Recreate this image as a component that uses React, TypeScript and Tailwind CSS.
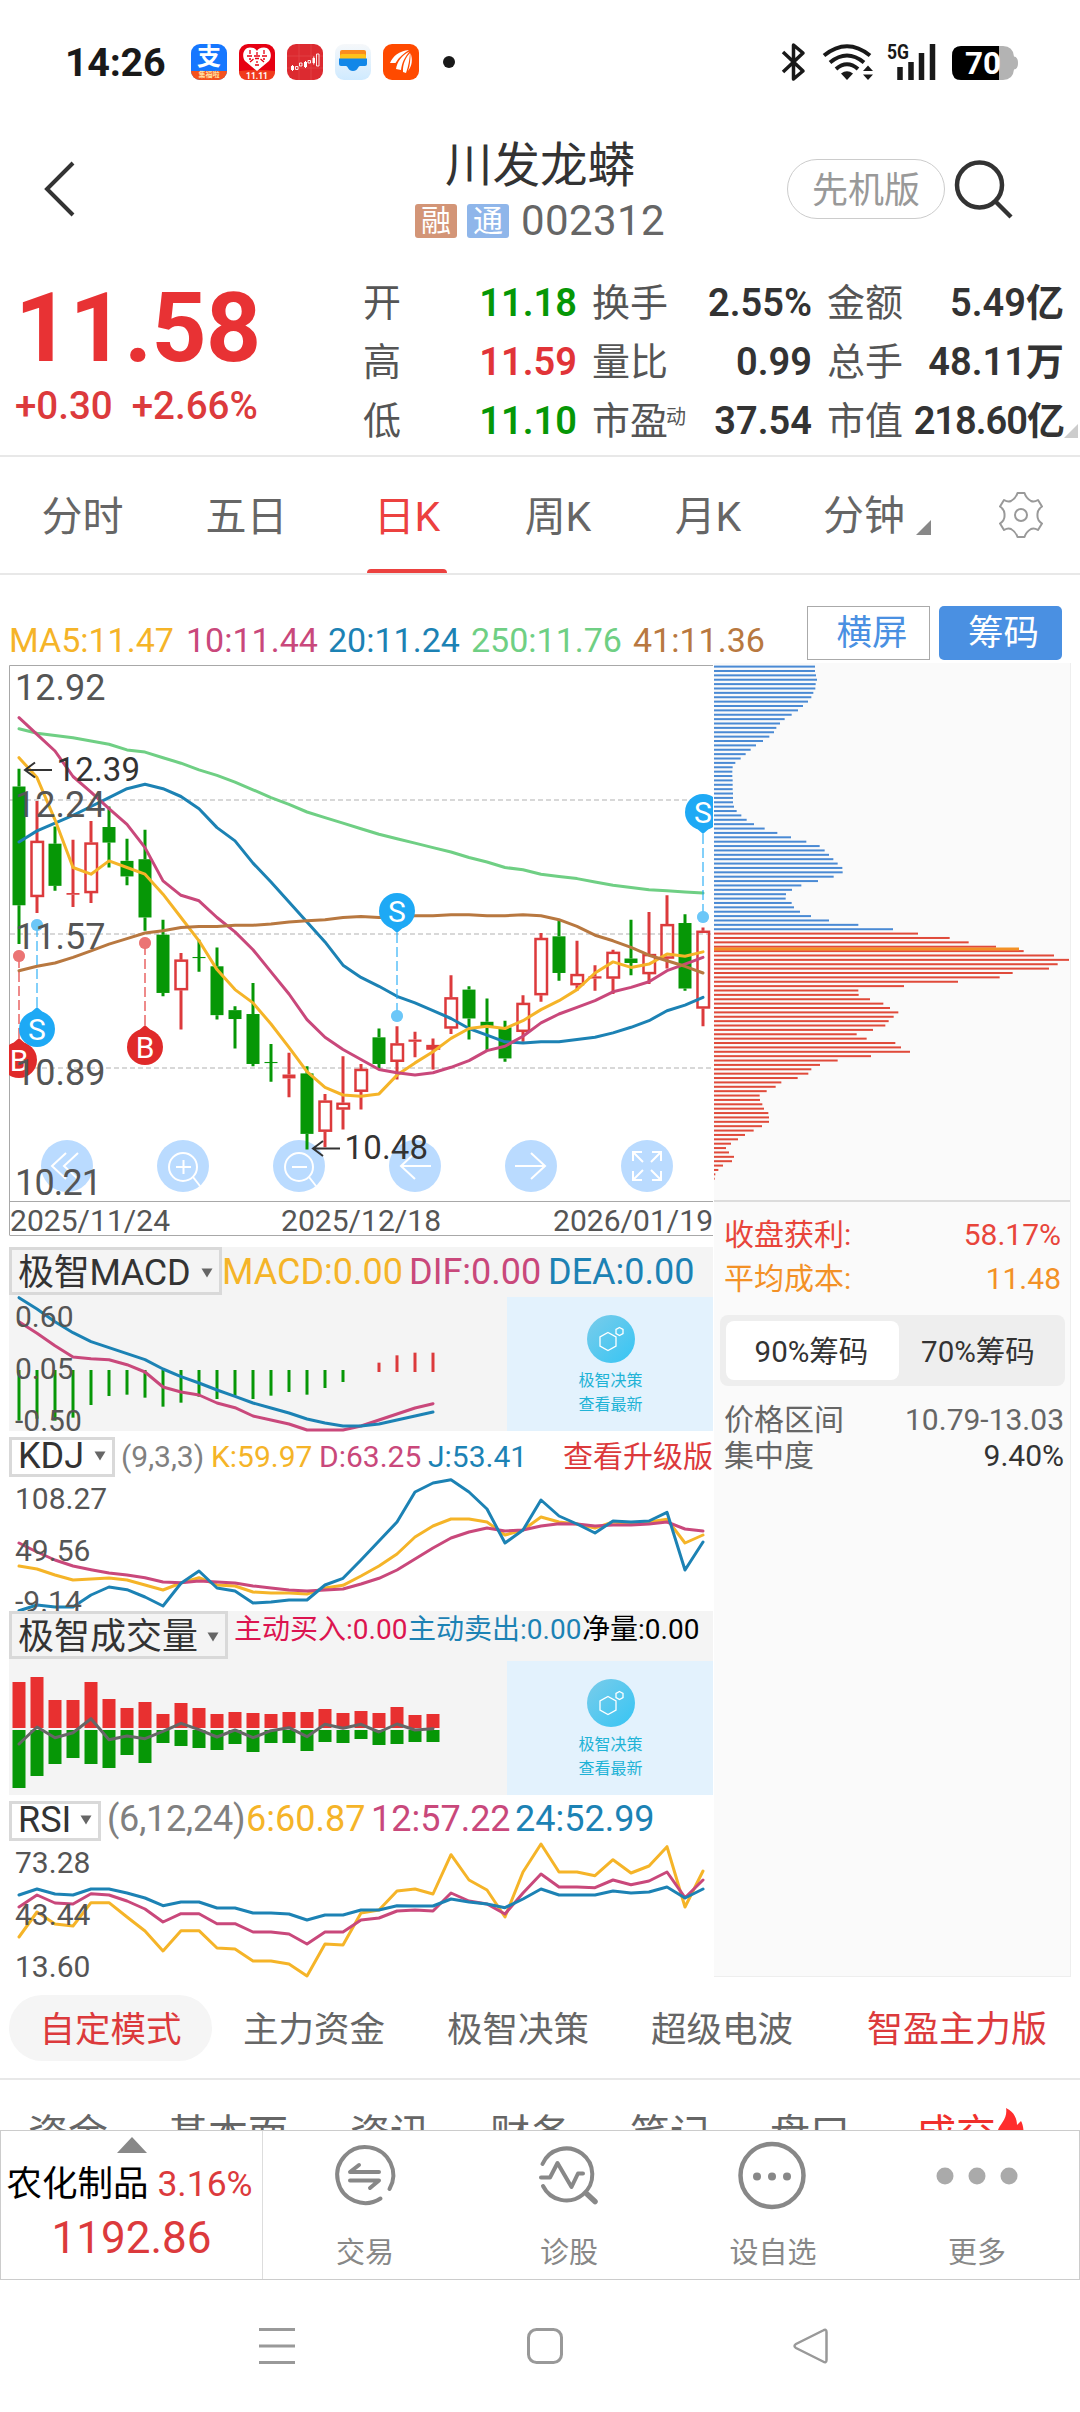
import type { ReactNode } from 'react';

const FONT = "font-[Roboto,'Noto_Sans_CJK_SC',sans-serif]";

const YELLOW = '#f5b428';
const PINK = '#c9487b';
const BLUE = '#1c82b4';
const RED = '#dc3a3c';
const GREEN = '#069706';

const STEP = 18;
const xAt = (i: number) => 19 + i * STEP;

// high, body top, body bottom, low, direction
type Candle = [number, number, number, number, 'u' | 'd' | 'f'];

const candles: Candle[] = [
  [98, 114, 221, 256, 'd'],
  [127, 163, 213.5, 228, 'u'],
  [150, 165.5, 203.5, 208, 'd'],
  [162, 210, 211.5, 222.5, 'f'],
  [145, 164.5, 210, 219, 'u'],
  [132, 150.5, 164.5, 187, 'd'],
  [161, 181, 195, 203, 'd'],
  [153, 179.5, 232, 244, 'd'],
  [234, 247.5, 300, 303, 'd'],
  [264, 270, 297.5, 333, 'u'],
  [252, 267.6, 268.6, 281, 'd'],
  [259, 276, 320, 324, 'd'],
  [312, 315.5, 323.5, 350, 'd'],
  [291, 319, 364, 366, 'd'],
  [346, 362.2, 363.2, 380, 'd'],
  [354, 373.5, 377, 394, 'f'],
  [366, 372.5, 427, 441, 'd'],
  [391, 397, 425, 439, 'u'],
  [357, 399, 405, 423, 'u'],
  [364, 368.5, 389, 405, 'u'],
  [332, 340, 364, 368, 'd'],
  [330, 345.5, 362, 378, 'u'],
  [335, 342, 344, 358, 'f'],
  [341, 347, 351, 369, 'u'],
  [284, 304, 332, 337, 'u'],
  [294, 297, 323, 342, 'd'],
  [305, 326, 330, 352, 'd'],
  [325, 331, 359, 362, 'd'],
  [302, 309, 335, 344, 'u'],
  [246, 250.5, 302, 308, 'u'],
  [234, 249, 282, 289, 'd'],
  [253, 283, 293, 298, 'u'],
  [275, 285, 287, 298, 'f'],
  [261, 263, 287, 301, 'u'],
  [234, 269, 273, 284, 'd'],
  [227, 265, 283, 292, 'u'],
  [212, 238, 269, 278, 'u'],
  [229, 237, 296, 298, 'd'],
  [241, 244, 314, 330, 'u'],
];

const maLines = [
  { color: '#6fcf84', values: [62, 66, 68, 70, 73, 76, 81, 83, 88, 93, 99, 104, 110, 117, 124, 130, 137, 142, 147, 152, 157, 161, 165, 169, 173, 178, 182, 187, 189, 193, 195, 197, 200, 203, 205, 207, 208, 209, 210] },
  { color: BLUE, values: [164, 154, 147, 140, 132, 124, 116, 112, 116, 123, 134, 151, 163, 183, 200, 218, 236, 254, 275, 286, 294, 303, 309, 316, 323, 332, 338, 344, 345, 344, 344, 342, 340, 336, 331, 325, 316, 311, 304] },
  { color: YELLOW, values: [88, 106, 144, 187, 193, 181, 187, 193, 211, 232, 253, 279, 297, 309, 328, 349, 371, 385, 392, 393, 391, 374, 363, 353, 341, 332, 330, 332, 325, 315, 307, 297, 282, 272, 277, 274, 265, 267, 263] },
  { color: PINK, values: [52, 67, 82, 105, 119, 134, 148, 169, 199, 212, 217, 232, 245, 261, 281, 301, 324, 340, 351, 360, 369, 372, 374, 372, 367, 361, 352, 348, 339, 327, 319, 313, 307, 299, 295, 290, 280, 274, 268] },
  { color: '#b87840', values: [280, 276, 273, 268, 262, 256, 251, 246, 244, 241, 240, 240, 239, 239, 238, 236, 235, 234, 232, 231, 232, 231.5, 230.5, 230.5, 229.5, 229.5, 230.5, 230.5, 229.5, 230.5, 234, 240, 248, 253, 259, 266, 271, 276, 282] },
];

const chips = [
  345, 345, 348, 351, 347, 346, 340, 334, 324, 309, 294, 275, 254, 240, 229, 222, 208, 189, 168, 152, 137, 122, 106, 98, 97, 97, 98, 98, 98, 99,
  99, 99, 102, 110, 124, 140, 162, 194, 232, 273, 319, 359, 374, 387, 400, 413, 427, 428, 401, 354, 304, 276, 258, 257, 275, 282, 300, 333, 387, 475,
  579, 654, 749, 806, 888, 971, 1062, 1107, 1073, 1047, 938, 899, 774, 612, 475, 476, 510, 550, 570, 595, 581, 566, 556, 519, 470, 500, 586, 603, 630, 513,
  413, 360, 334, 325, 293, 244, 227, 200, 179, 180, 187, 192, 205, 207, 207, 186, 161, 135, 114, 93, 78, 87, 102, 96, 69, 55, 46, 44,
];
const FIRST_RED_CHIP = 61;

const macdBars = [572, 566, 572, 563, 525, 498, 494, 503, 530, 518, 500, 507, 497, 507, 497, 486, 494, 474, 456];
const macdRed = [398, 376, 368, 368];
const dea = [203, 237, 275, 308, 335, 353, 371, 389, 417, 440, 459, 480, 499, 519, 534, 549, 567, 579, 588, 588, 582, 570, 558, 546];
const dif = [275, 310, 347, 381, 386, 389, 404, 426, 471, 486, 495, 519, 533, 558, 570, 582, 600, 600, 600, 588, 570, 552, 534, 521];

const kdjK = [1008, 1017, 1035, 1050, 1047, 1044, 1050, 1065, 1080, 1059, 1043, 1065, 1068, 1086, 1089, 1089, 1092, 1074, 1066, 1038, 1008, 972, 921, 888, 867, 867, 876, 915, 900, 861, 876, 882, 894, 876, 882, 876, 868, 939, 915];
const kdjD = [939, 966, 990, 1008, 1019, 1029, 1035, 1043, 1056, 1058, 1053, 1056, 1059, 1068, 1074, 1080, 1083, 1080, 1077, 1062, 1045, 1020, 987, 954, 924, 906, 894, 903, 900, 888, 881, 882, 888, 885, 885, 882, 876, 897, 903];
const kdjJ = [1142, 1125, 1131, 1131, 1095, 1071, 1079, 1101, 1128, 1060, 1023, 1074, 1083, 1119, 1116, 1110, 1110, 1065, 1045, 990, 933, 876, 786, 759, 749, 786, 837, 939, 900, 810, 858, 882, 909, 873, 876, 873, 847, 1020, 936];

const volUp = [246, 231, 300, 300, 246, 297, 324, 306, 342, 309, 324, 342, 336, 339, 342, 336, 336, 327, 339, 333, 339, 321, 345, 342];
const volDown = [564, 528, 492, 474, 492, 504, 465, 489, 429, 438, 444, 450, 432, 456, 429, 429, 453, 426, 429, 417, 435, 432, 426, 426];
const volNet = [432, 381, 413, 398, 356, 419, 408, 416, 394, 370, 389, 411, 390, 413, 392, 383, 410, 373, 385, 373, 396, 372, 390, 386];

const rsi6 = [1011, 936, 972, 978, 908, 908, 951, 993, 1053, 992, 992, 1044, 1047, 1083, 1083, 1092, 1128, 1032, 1035, 939, 930, 873, 867, 882, 764, 840, 870, 951, 816, 732, 816, 816, 827, 779, 819, 798, 740, 921, 813];
const rsi12 = [921, 885, 909, 912, 881, 885, 903, 927, 966, 941, 941, 971, 971, 996, 996, 1002, 1032, 996, 996, 960, 954, 933, 930, 933, 879, 903, 912, 942, 879, 822, 861, 861, 863, 840, 854, 843, 816, 893, 840];
const rsi24 = [885, 867, 882, 885, 867, 867, 879, 894, 917, 906, 906, 924, 924, 939, 939, 942, 960, 945, 945, 930, 930, 917, 918, 918, 897, 906, 912, 923, 897, 867, 885, 885, 885, 873, 879, 876, 861, 894, 867];

const kY = (v: number) => v * 1.1098;

const Line = ({ values, color, toY }: { values: number[]; color: string; toY: (v: number) => number }) => (
  <polyline
    points={values.map((v, i) => `${xAt(i)},${toY(v).toFixed(1)}`).join(' ')}
    fill="none"
    stroke={color}
    strokeWidth="3"
    strokeLinejoin="round"
    strokeLinecap="round"
  />
);

const StatusBar = () => (
  <div className="flex h-[100px] shrink-0 items-center pt-[24px] pl-[65px] text-[#191919]">
    <div className="w-[126px] pt-[1px] text-[39.5px] leading-none font-bold tracking-[-0.3px]">14:26</div>
    <div className="flex gap-[12px]">
      <div className="flex h-[36px] w-[36px] flex-col items-center overflow-hidden rounded-[9px] bg-[#1677ff] text-white">
        <span className="h-[27px] text-[24px] leading-[27px] font-bold">支</span>
        <span className="h-[9px] w-full bg-[#f4511e] text-center text-[7px] leading-[9px] font-bold text-[#ffe0a0]">集福啦</span>
      </div>
      <svg width="36" height="36" viewBox="0 0 36 36">
        <rect width="36" height="36" rx="9" fill="#e60012" />
        <path d="M0 27Q18 25 36 27V27Q36 36 27 36H9Q0 36 0 27Z" fill="#f03a1c" />
        <path d="M18 27L6 17C2 11 5 3.500 11 3.500C15 3.500 17 5 18 7C19 5 21 3.500 25 3.500C31 3.500 34 11 30 17Z" fill="#fff" />
        <path d="M11 6V10M8 12H13M25 6V10M23 12H28M14.500 15L11 18M21.500 15L25 18M16 21H20M18 8V11M18 17V19M10 15H12M24 15H26M15 12H21M16 14.500H20" stroke="#e60012" strokeWidth="1.300" />
        <text x="18" y="34.500" fontSize="8.500" fontWeight="700" fill="#fff" textAnchor="middle">11.11</text>
      </svg>
      <svg width="36" height="36" viewBox="0 0 36 36">
        <rect width="36" height="36" rx="9" fill="#dc2a30" />
        <path d="M12 0V36M24 0V36M0 12H36M0 24H36" stroke="#e4484c" strokeWidth="0.700" />
        <g fill="#fff">
          <rect x="4" y="22" width="3" height="4" />
          <rect x="17" y="18" width="3" height="5" />
          <rect x="25.500" y="14" width="2.500" height="5" />
          <path d="M5 21h1v6h-1zM18 17h1v7h-1zM26.300 12.500h1v8h-1z" />
        </g>
        <path d="M8.500 22.500h2.500v3h-2.500zM12.500 19h2.500v3h-2.500zM21 16.500h2.500v2.500h-2.500zM29.500 10h2.500v12h-2.500z" fill="none" stroke="#fff" strokeWidth="0.900" />
      </svg>
      <svg width="36" height="36" viewBox="0 0 36 36">
        <defs>
          <linearGradient id="wallet" x1="0" y1="0" x2="0" y2="1">
            <stop offset="0" stopColor="#f6f8fa" />
            <stop offset="1" stopColor="#cfeaff" />
          </linearGradient>
        </defs>
        <rect width="36" height="36" rx="9" fill="url(#wallet)" />
        <path d="M7 6H29Q31 6 31 8V13H5V8Q5 6 7 6Z" fill="#fb8c1e" />
        <rect x="5" y="10" width="26" height="8" rx="2" fill="#ffc21a" />
        <path d="M4 14.500H32V20Q32 22 30 22H25C23 22 23 27 18 27C13 27 13 22 11 22H6Q4 22 4 20Z" fill="#1287e8" />
      </svg>
      <svg width="36" height="36" viewBox="0 0 36 36">
        <rect width="36" height="36" rx="9" fill="#ff4a00" />
        <path d="M7 19C10 12 16 7 26 6C21 9 16 13 12.500 19ZM13 25C14 18 19 11 26.500 7.500C22 13 19 18 18 26ZM20 28C19.500 20 23 13 27 9C26.500 15 25.500 22 23 29ZM25 27C27 22 27.500 15 27.500 9C30 16 29 22 25 27Z" fill="#fff" />
      </svg>
    </div>
    <div className="ml-[24px] h-[12px] w-[12px] rounded-full bg-[#191919]" />
    <svg className="mr-[61px] ml-auto" width="238" height="40" viewBox="0 0 238 40">
      <path d="M2 10L22 29L12.500 37V3L22 11L2 30" fill="none" stroke="#191919" strokeWidth="3.500" strokeLinejoin="round" />
      <g fill="none" stroke="#191919" strokeWidth="4">
        <path d="M43 13.500Q66 -5 89 13.500" />
        <path d="M49 20.500Q66 6.500 83 20.500" />
        <path d="M55 27Q66 17.500 77 27" />
      </g>
      <path d="M60 31.500Q66 27 72 31.500L66 38Z" fill="#191919" />
      <path d="M82 29L87 23.500L92 29ZM82 32.500H92L87 38Z" fill="#191919" />
      <text x="106" y="17" fontSize="21" fontWeight="700" fill="#191919" textLength="22" lengthAdjust="spacingAndGlyphs">5G</text>
      <path d="M119 38V25M130 38V20M140.500 38V11M151.500 38V2" stroke="#191919" strokeWidth="5.500" />
      <path d="M180 4H222Q232 4 233 14.500Q237 15 237 21Q237 27 233 27.500Q232 38 222 38H180Q171 38 171 28V14Q171 4 180 4Z" fill="#b3b3b3" />
      <path d="M180 4H218V38H180Q171 38 171 28V14Q171 4 180 4Z" fill="#000" />
      <text x="184" y="32" fontSize="31" fontWeight="700" fill="#fff" textLength="36" lengthAdjust="spacingAndGlyphs">70</text>
    </svg>
  </div>
);

const Header = () => (
  <div className="flex h-[155px] shrink-0">
    <div className="w-[400px]">
      <svg className="mt-[59px] ml-[42px]" width="36" height="60" viewBox="0 0 36 60">
        <path d="M31 4L5 30L31 56" fill="none" stroke="#333" strokeWidth="4" />
      </svg>
    </div>
    <div className="flex w-[280px] flex-col items-center pt-[42px]">
      <div className="text-[47.5px] leading-[48px] text-[#333]">川发龙蟒</div>
      <div className="mt-[7px] flex items-center">
        <span className="flex h-[34px] w-[42px] items-center justify-center rounded-[3px] bg-[#d39577] text-[30px] leading-none text-white">融</span>
        <span className="ml-[10px] flex h-[34px] w-[42px] items-center justify-center rounded-[3px] bg-[#8fb6ea] text-[30px] leading-none text-white">通</span>
        <span className="ml-[12px] text-[42px] leading-[48px] tracking-[0.4px] text-[#666]">002312</span>
      </div>
    </div>
    <div className="flex flex-1 pt-[59px] pl-[107px]">
      <div className="flex h-[60px] w-[158px] items-center justify-center rounded-full border border-[#ccc] pt-[3px] text-[36px] leading-none text-[#999]">先机版</div>
      <svg className="ml-[6px]" width="66" height="66" viewBox="0 0 66 66">
        <circle cx="28.500" cy="26" r="22.500" fill="none" stroke="#333" strokeWidth="4.500" />
        <path d="M44 42L60 58" stroke="#333" strokeWidth="4.500" />
      </svg>
    </div>
  </div>
);

const quotes = [
  [
    { label: '开', value: '11.18', color: 'text-[#069706]' },
    { label: '换手', value: '2.55%', color: 'text-[#333]' },
    { label: '金额', value: '5.49亿', color: 'text-[#333]' },
  ],
  [
    { label: '高', value: '11.59', color: 'text-[#e13438]' },
    { label: '量比', value: '0.99', color: 'text-[#333]' },
    { label: '总手', value: '48.11万', color: 'text-[#333]' },
  ],
  [
    { label: '低', value: '11.10', color: 'text-[#069706]' },
    { label: '市盈', sup: '动', value: '37.54', color: 'text-[#333]' },
    { label: '市值', value: '218.60亿', color: 'text-[#333]' },
  ],
];

const Quote = () => (
  <div className="flex h-[200px] shrink-0">
    <div className="w-[363px] pl-[15px]">
      <div className="mt-[26px] text-[96px] leading-[94px] font-bold tracking-[-0.5px] text-[#e83234]">11.58</div>
      <div className="mt-[11px] flex gap-[19px] text-[38.5px] leading-[40px] font-medium text-[#dc3a3c]">
        <span>+0.30</span>
        <span>+2.66%</span>
      </div>
    </div>
    <div className="flex flex-col pt-[19px]">
      {quotes.map((row, i) => (
        <div key={i} className="grid h-[59px] grid-cols-[214px_220px_237px] gap-x-[15px] leading-[59px]">
          {row.map((q) => (
            <div key={q.label} className="flex h-[59px] items-center justify-between whitespace-nowrap">
              <span className="flex text-[38px] text-[#555]">
                {q.label}
                {'sup' in q && <span className="-ml-[2px] text-[20px] leading-[50px]">{q.sup}</span>}
              </span>
              <span className={`text-[38px] font-semibold ${q.value.length > 6 ? 'tracking-[-1px]' : ''} ${q.color}`}>{q.value}</span>
            </div>
          ))}
        </div>
      ))}
    </div>
    <svg className="mt-[169px] -ml-[2px]" width="16" height="14" viewBox="0 0 16 14">
      <path d="M16 0V14H2Z" fill="#ccc" />
    </svg>
  </div>
);

const periods = [
  { label: '分时', width: 'w-[165px]' },
  { label: '五日', width: 'w-[163px]' },
  { label: '日K', width: 'w-[158px]', active: true },
  { label: '周K', width: 'w-[144px]' },
  { label: '月K', width: 'w-[156px]' },
];

const PeriodTabs = () => (
  <div className="flex h-[120px] shrink-0 border-t-2 border-b-2 border-[#e8e8e8] text-[41px] text-[#666]">
    {periods.map((p) => (
      <div key={p.label} className={`flex flex-col items-center justify-end ${p.width} ${p.active ? 'text-[#ec413f]' : ''}`}>
        <div className="leading-[104px]">{p.label}</div>
        <div className={`h-[4px] w-[80px] rounded-t ${p.active ? 'bg-[#ec413f]' : ''}`} />
      </div>
    ))}
    <div className="flex w-[180px] items-center pt-[4px] pl-[37px]">
      <span>分钟</span>
      <svg className="mt-[22px] ml-[11px]" width="16" height="16" viewBox="0 0 16 16">
        <path d="M15 0V15H0Z" fill="#888" />
      </svg>
    </div>
    <svg className="mt-[33px] ml-[30px]" width="50" height="50" viewBox="0 0 50 50">
      <path
        d="M21.500 3H28.500Q30 8 35 11Q38 12.500 42 10L46 16.500Q41 20 41.500 25Q41 30 46 33.500L42 40Q38 37.500 35 39Q30 42 28.500 47H21.500Q20 42 15 39Q12 37.500 8 40L4 33.500Q9 30 8.500 25Q9 20 4 16.500L8 10Q12 12.500 15 11Q20 8 21.500 3Z"
        fill="none"
        stroke="#999"
        strokeWidth="2"
        strokeLinejoin="round"
      />
      <circle cx="25" cy="25" r="6" fill="none" stroke="#999" strokeWidth="2" />
    </svg>
  </div>
);

const MaRow = () => (
  <div className="flex h-[85px] shrink-0 pl-[9px] text-[34px] whitespace-nowrap">
    <div className="flex w-[798px] pt-[45px] leading-[40px]">
      <span className="w-[177px] text-[#f5b428]">MA5:11.47</span>
      <span className="w-[142px] text-[#c9487b]">10:11.44</span>
      <span className="w-[143px] text-[#1c82b4]">20:11.24</span>
      <span className="w-[162px] text-[#6fcf84]">250:11.76</span>
      <span className="text-[#b87840]">41:11.36</span>
    </div>
    <div className="mt-[31px] flex h-[54px] w-[123px] items-center justify-center border border-[#aaa] pt-[1px] pl-[7px] text-[35.5px] text-[#4a90e2]">横屏</div>
    <div className="mt-[31px] ml-[9px] flex h-[54px] w-[123px] items-center justify-center rounded-[5px] bg-[#4a90e2] pt-[1px] pl-[6px] text-[35.5px] text-white">筹码</div>
  </div>
);

const Marker = ({ x, y, dot, letter, up }: { x: number; y: number; dot: number; letter: string; up?: boolean }) => {
  const color = letter === 'S' ? '#1ea9f5' : '#e02a2a';
  const dir = up ? -1 : 1;
  return (
    <g>
      <path d={`M${x} ${y + dir * 22}V${dot}`} stroke={color} strokeOpacity="0.55" strokeWidth="2" strokeDasharray="10 4" />
      <circle cx={x} cy={dot} r="6" fill={color} />
      <circle cx={x} cy={dot} r="6" fill="#fff" fillOpacity="0.35" />
      <circle cx={x} cy={y} r="18" fill={color} />
      <path d={`M${x - 8} ${y + dir * 15}L${x} ${y + dir * 22}L${x + 8} ${y + dir * 15}Z`} fill={color} />
      <text x={x} y={y + 10.5} fontSize="30" fill="#fff" textAnchor="middle">{letter}</text>
    </g>
  );
};

const controlIcons: ReactNode[] = [
  <path d="M-1 -13L-15 0L-1 13M11 -13L-3 0L11 13" />,
  <path d="M14 1A14 14 0 1 1 -14 1A14 14 0 1 1 14 1M10 11L17 20M-7 1H8M0.500 -6V8" />,
  <path d="M14 1A14 14 0 1 1 -14 1A14 14 0 1 1 14 1M10 11L17 20M-7 1H8" />,
  <path d="M16 0H-13M0 -13L-14 0L0 13" />,
  <path d="M-16 0H13M0 -13L14 0L0 13" />,
  <path d="M-14 -5V-14H-5M-14 -14L-4 -4M14 -5V-14H5M14 -14L4 -4M-14 5V14H-5M-14 14L-4 4M14 5V14H5M14 14L4 4" />,
];

const KChart = () => (
  <svg className="block shrink-0" width="714" height="577" viewBox="0 0 714 577">
    <defs>
      <clipPath id="plot">
        <rect x="9" y="0" width="704" height="577" />
      </clipPath>
    </defs>
    <path d="M9.500 575V5.500H713M9.500 541.500H713M9.500 575.500H713" fill="none" stroke="#a8a8a8" strokeWidth="1" />
    {[140, 274, 408].map((y) => (
      <path key={y} d={`M10 ${y}H713`} stroke="#ccc" strokeWidth="1.500" strokeDasharray="5 3" />
    ))}
    <g fill="#badbff">
      {controlIcons.map((_, i) => (
        <circle key={i} cx={67 + i * 116} cy="506" r="26" />
      ))}
    </g>
    {controlIcons.map((icon, i) => (
      <g key={i} transform={`translate(${67 + i * 116} 506)`} fill="none" stroke="#fff" strokeWidth="2">
        {icon}
      </g>
    ))}
    {candles.map(([high, top, bottom, low, dir], i) => {
      const x = xAt(i);
      const color = dir === 'd' ? GREEN : RED;
      return (
        <g key={i}>
          <path d={`M${x} ${kY(high)}V${kY(top)}M${x} ${kY(bottom)}V${kY(low)}`} stroke={color} strokeWidth="3" />
          {dir === 'u' ? (
            <rect x={x - 5.5} y={kY(top) + 1} width="11.500" height={Math.max(kY(bottom - top) - 2, 2)} fill="none" stroke={color} strokeWidth="2.500" />
          ) : (
            <rect x={x - 6.5} y={kY(top)} width="13" height={kY(bottom - top)} fill={color} />
          )}
        </g>
      );
    })}
    {maLines.map((l) => (
      <Line key={l.color} values={l.values} color={l.color} toY={kY} />
    ))}
    <g clipPath="url(#plot)">
      <Marker x={19} y={400} dot={296} letter="B" up />
      <Marker x={37} y={369} dot={265} letter="S" up />
      <Marker x={145} y={387} dot={283} letter="B" up />
      <Marker x={397} y={251} dot={356} letter="S" />
      <Marker x={703} y={152} dot={257} letter="S" />
    </g>
    <g fontSize="36" fill="#555">
      <text x="15" y="40">12.92</text>
      <text x="15" y="156.500">12.24</text>
      <text x="15" y="288.500">11.57</text>
      <text x="15" y="425">10.89</text>
      <text x="15" y="535" textLength="87">10.21</text>
    </g>
    <g fontSize="33" fill="#333">
      <text x="56.500" y="121" textLength="83.500">12.39</text>
      <text x="344.500" y="499" textLength="83.500">10.48</text>
    </g>
    <path d="M52 110H25M35 102.500L25 110L35 117.500M340 488.500H313M323 481L313 488.500L323 496" fill="none" stroke="#333" strokeWidth="2" />
    <g fontSize="30" fill="#555">
      <text x="10" y="571" textLength="160">2025/11/24</text>
      <text x="281" y="571" textLength="160">2025/12/18</text>
      <text x="553" y="571" textLength="160">2026/01/19</text>
    </g>
  </svg>
);

const Picker = ({ label, className }: { label: string; className: string }) => (
  <div className={`flex shrink-0 items-center justify-between border-[3px] border-[#d9d9d9] pr-[6px] pl-[6px] text-[36px] leading-none text-[#333] ${className}`}>
    <span>{label}</span>
    <svg width="12" height="10" viewBox="0 0 12 10">
      <path d="M0.500 0.500H11.500L6 9.500Z" fill="#666" />
    </svg>
  </div>
);

const Promo = () => (
  <div className="flex h-[134px] w-[206px] flex-col items-center bg-[#e3f2fd] pt-[18px] pl-[1px] text-[16px] leading-[24px] text-[#1fb3d6]">
    <svg className="mb-[6px]" width="48" height="48" viewBox="0 0 48 48">
      <defs>
        <linearGradient id="promo" x1="0" y1="0" x2="1" y2="1">
          <stop offset="0" stopColor="#7accea" />
          <stop offset="1" stopColor="#36c5f4" />
        </linearGradient>
      </defs>
      <circle cx="24" cy="24" r="24" fill="url(#promo)" />
      <path d="M21 17.500L29 22V31L21 35.500L13 31V22ZM32.500 12.500L36 14.500V18.500L32.500 20.500L29 18.500V14.500Z" fill="none" stroke="#fff" strokeWidth="1.300" />
    </svg>
    <span>极智决策</span>
    <span>查看最新</span>
  </div>
);

const MacdPanel = () => {
  const toY = (v: number) => v / 3 - 67;
  return (
    <div className="mt-[10px] ml-[9px] w-[704px] bg-[#f4f4f4]">
      <div className="flex h-[50px] text-[36px] leading-[51px] whitespace-nowrap">
        <Picker label="极智MACD" className="h-[48px] w-[213px] pt-[3px] tracking-[-0.3px]" />
        <span className="w-[187px] text-[#f5b428]">MACD:0.00</span>
        <span className="w-[139px] text-[#c9487b]">DIF:0.00</span>
        <span className="text-[#1c82b4]">DEA:0.00</span>
      </div>
      <div className="flex justify-between">
        <svg className="block overflow-visible" width="498" height="134" viewBox="9 0 498 134">
          {macdBars.map((v, i) => (
            <path key={i} d={`M${xAt(i)} ${toY(420)}V${toY(v)}`} stroke={GREEN} strokeWidth="3" />
          ))}
          {macdRed.map((v, i) => (
            <path key={i} d={`M${xAt(i + 20)} ${toY(v)}V${toY(426)}`} stroke={RED} strokeWidth="3" />
          ))}
          <Line values={dif} color={PINK} toY={toY} />
          <Line values={dea} color={BLUE} toY={toY} />
          <g fontSize="30" fill="#555">
            <text x="15" y="30">0.60</text>
            <text x="15" y="82">0.05</text>
            <text x="15" y="134">-0.50</text>
          </g>
        </svg>
        <Promo />
      </div>
    </div>
  );
};

const KdjPanel = () => {
  const toY = (v: number) => v / 3 - 247;
  return (
    <div className="mt-[6px] ml-[9px] w-[704px]">
      <div className="flex h-[40px] text-[30px] leading-[40px] whitespace-nowrap">
        <Picker label="KDJ" className="h-[40px] w-[106px] pb-[3px]" />
        <span className="ml-[6px] w-[90px] text-[#808080]">(9,3,3)</span>
        <span className="w-[108px] text-[#f5b428]">K:59.97</span>
        <span className="w-[109px] text-[#c9487b]">D:63.25</span>
        <span className="text-[#1c82b4]">J:53.41</span>
        <span className="ml-auto text-[#dc3a3c]">查看升级版</span>
      </div>
      <svg className="block overflow-visible" width="704" height="134" viewBox="9 0 704 134">
        <Line values={kdjK} color={YELLOW} toY={toY} />
        <Line values={kdjD} color={PINK} toY={toY} />
        <Line values={kdjJ} color={BLUE} toY={toY} />
        <g fontSize="30" fill="#555">
          <text x="15" y="32">108.27</text>
          <text x="15" y="83.500">49.56</text>
          <text x="15" y="135">-9.14</text>
        </g>
      </svg>
    </div>
  );
};

const VolumePanel = () => {
  const toY = (v: number) => v / 3 - 61;
  return (
    <div className="ml-[9px] w-[704px] bg-[#f4f4f4]">
      <div className="flex h-[50px] text-[28px] leading-[38px] whitespace-nowrap">
        <Picker label="极智成交量" className="h-[48px] w-[219px] pt-[3px]" />
        <span className="ml-[6px] w-[174px] text-[#dc1450]">主动买入:0.00</span>
        <span className="w-[174px] text-[#1c82b4]">主动卖出:0.00</span>
        <span className="text-black">净量:0.00</span>
      </div>
      <div className="flex justify-between">
        <svg className="block" width="498" height="134" viewBox="9 0 498 134">
          {volUp.map((v, i) => (
            <rect key={i} x={xAt(i) - 6.5} y={toY(v)} width="13" height={toY(384) - toY(v)} fill="#e83030" />
          ))}
          {volDown.map((v, i) => (
            <rect key={i} x={xAt(i) - 6.5} y={toY(390)} width="13" height={toY(v) - toY(390)} fill={GREEN} />
          ))}
          <Line values={volNet} color="#666" toY={toY} />
        </svg>
        <Promo />
      </div>
    </div>
  );
};

const RsiPanel = () => {
  const toY = (v: number) => v / 3 - 241;
  return (
    <div className="mt-[6px] ml-[9px] w-[704px]">
      <div className="flex h-[40px] text-[36px] leading-[36px] whitespace-nowrap">
        <Picker label="RSI" className="h-[40px] w-[92px] pb-[3px]" />
        <span className="ml-[6px] w-[139px] tracking-[-0.2px] text-[#808080]">(6,12,24)</span>
        <span className="w-[125px] text-[#f5b428]">6:60.87</span>
        <span className="w-[144px] text-[#c9487b]">12:57.22</span>
        <span className="text-[#1c82b4]">24:52.99</span>
      </div>
      <svg className="block overflow-visible" width="704" height="140" viewBox="9 0 704 140">
        <Line values={rsi6} color={YELLOW} toY={toY} />
        <Line values={rsi12} color={PINK} toY={toY} />
        <Line values={rsi24} color={BLUE} toY={toY} />
        <g fontSize="30" fill="#555">
          <text x="15" y="32">73.28</text>
          <text x="15" y="84">43.44</text>
          <text x="15" y="136">13.60</text>
        </g>
      </svg>
    </div>
  );
};

const ChipPanel = () => (
  <div className="mt-[3px] h-[1314px] w-[357px] border-r border-b border-[#eee] bg-[#fafafa] text-[30px]">
    <svg className="block" width="357" height="537" viewBox="0 0 357 537">
      {chips.map((v, i) => (
        <rect key={i} x="0" y={2.6 + i * 4.377} width={(v - 42) / 3} height="2" fill={i < FIRST_RED_CHIP ? '#4a8ad4' : '#e04a3a'} />
      ))}
      <rect x="0" y="284.500" width="305" height="3" fill="#f39126" />
    </svg>
    <div className="border-t-2 border-[#dcdcdc] pt-[11px] pr-[9px] pl-[10px]">
      <div className="flex justify-between leading-[44px] text-[#e8453a]">
        <span>收盘获利:</span>
        <span>58.17%</span>
      </div>
      <div className="flex justify-between leading-[44px] text-[#f39126]">
        <span>平均成本:</span>
        <span>11.48</span>
      </div>
    </div>
    <div className="mt-[14px] ml-[6px] flex h-[71px] w-[345px] rounded-[8px] bg-[#eee] p-[6px] text-[29.5px] text-[#333]">
      <div className="flex w-[173px] items-center justify-center rounded-[8px] bg-white pt-[3px] pr-[2px]">90%筹码</div>
      <div className="flex flex-1 items-center justify-center pt-[3px] pr-[2px]">70%筹码</div>
    </div>
    <div className="mt-[16px] pr-[6px] pl-[10px] leading-[36px]">
      <div className="flex justify-between text-[#666]">
        <span>价格区间</span>
        <span>10.79-13.03</span>
      </div>
      <div className="flex justify-between">
        <span className="text-[#666]">集中度</span>
        <span className="text-[#333]">9.40%</span>
      </div>
    </div>
  </div>
);

const ModeBar = () => (
  <div className="flex h-[99px] shrink-0 border-b-2 border-[#e8e8e8] pt-[14px] pl-[9px] text-[35.5px] leading-[70px] whitespace-nowrap text-[#666]">
    <span className="h-[66px] w-[203px] rounded-full bg-[#f5f5f5] text-center text-[#dc3a3c]">自定模式</span>
    <span className="w-[204px] text-center">主力资金</span>
    <span className="w-[204px] text-center">极智决策</span>
    <span className="w-[204px] text-center">超级电波</span>
    <span className="ml-[43px] text-[36px] text-[#dc3a3c]">智盈主力版</span>
  </div>
);

const infoTabs = [
  { label: '资金', width: 'w-[140px]' },
  { label: '基本面', width: 'w-[182px]' },
  { label: '资讯', width: 'w-[140px]' },
  { label: '财务', width: 'w-[140px]' },
  { label: '笔记', width: 'w-[140px]' },
  { label: '盘口', width: 'w-[146px]' },
];

const InfoTabs = () => (
  <div className="flex h-[50px] shrink-0 overflow-hidden pt-[26px] pl-[28px] text-[40px] leading-[58px] whitespace-nowrap text-[#666]">
    {infoTabs.map((t) => (
      <span key={t.label} className={`shrink-0 ${t.width}`}>{t.label}</span>
    ))}
    <span className="text-[#f0302c]">成交</span>
    <svg className="shrink-0" width="30" height="40" viewBox="0 0 30 40">
      <path d="M10 2C19 6 21 14 21 19L25 15C29 22 30 40 14 40C2 40 2 28 2 24C4 18 12 12 10 2Z" fill="#ff2d2d" />
    </svg>
  </div>
);

const actions = [
  {
    label: '交易',
    icon: (
      <g fill="none" stroke="#888" strokeWidth="4" strokeLinecap="round">
        <path d="M60.500 49A28 28 0 1 0 51.500 58.500" />
        <path d="M50 32H21L30 25M21 40.500H50L41 48" strokeLinejoin="round" />
      </g>
    ),
  },
  {
    label: '诊股',
    icon: (
      <g fill="none" stroke="#888" strokeWidth="4" strokeLinecap="round" strokeLinejoin="round">
        <path d="M9.500 24A26 26 0 1 1 10 46" />
        <path d="M8 37.500H17L24.500 23L38.500 47L45 33.500H50" />
        <path d="M54.500 54.500L62 61.500" strokeWidth="5.500" />
      </g>
    ),
  },
  {
    label: '设自选',
    icon: (
      <g fill="#888">
        <circle cx="35" cy="35.500" r="31.500" fill="none" stroke="#888" strokeWidth="4.500" />
        <circle cx="20" cy="36.500" r="4" />
        <circle cx="35" cy="36.500" r="4" />
        <circle cx="50" cy="36.500" r="4" />
      </g>
    ),
  },
  {
    label: '更多',
    icon: (
      <g fill="#aaa">
        <circle cx="4" cy="36" r="8.500" />
        <circle cx="36" cy="36" r="8.500" />
        <circle cx="68" cy="36" r="8.500" />
      </g>
    ),
  },
];

const BottomBar = () => (
  <div className="flex h-[150px] shrink-0 border border-[#ccc]">
    <div className="flex w-[262px] flex-col items-center border-r border-[#ddd] pt-[6px]">
      <svg width="30" height="16" viewBox="0 0 30 16">
        <path d="M15 0L30 16H0Z" fill="#888" />
      </svg>
      <div className="mt-[9px] flex gap-[9px] pr-[4px] text-[35.5px] leading-[44px] whitespace-nowrap text-black">
        <span>农化制品</span>
        <span className="text-[#dc3a3c]">3.16%</span>
      </div>
      <div className="mt-[5px] text-[44px] leading-[54px] text-[#dc3a3c]">1192.86</div>
    </div>
    {actions.map((a) => (
      <div key={a.label} className="flex flex-1 flex-col items-center pt-[9px] text-[29px] leading-[36px] text-[#888]">
        <svg className="overflow-visible" width="72" height="72" viewBox="0 0 72 72">{a.icon}</svg>
        <span className="mt-[23px]">{a.label}</span>
      </div>
    ))}
  </div>
);

const NavBar = () => (
  <div className="flex h-[132px] shrink-0 pt-[46px] pl-[258px]">
    <svg width="572" height="40" viewBox="0 0 572 40" fill="none" stroke="#999" strokeWidth="3">
      <path d="M1 3.500H37M1 20H37M1 36.500H37" />
      <rect x="270.500" y="3.500" width="33" height="33" rx="8" />
      <path d="M568.500 6V34Q568.500 37.500 565 35.500L538 22Q535 20 538 18L565 4.500Q568.500 2.500 568.500 6Z" strokeWidth="2.500" />
    </svg>
  </div>
);

export default function App() {
  return (
    <div className={`flex h-[2412px] w-[1080px] flex-col overflow-hidden bg-white ${FONT}`}>
      <StatusBar />
      <Header />
      <Quote />
      <PeriodTabs />
      <MaRow />
      <div className="flex h-[1321px] shrink-0">
        <div className="w-[714px]">
          <KChart />
          <MacdPanel />
          <KdjPanel />
          <VolumePanel />
          <RsiPanel />
        </div>
        <ChipPanel />
      </div>
      <ModeBar />
      <InfoTabs />
      <BottomBar />
      <NavBar />
    </div>
  );
}
